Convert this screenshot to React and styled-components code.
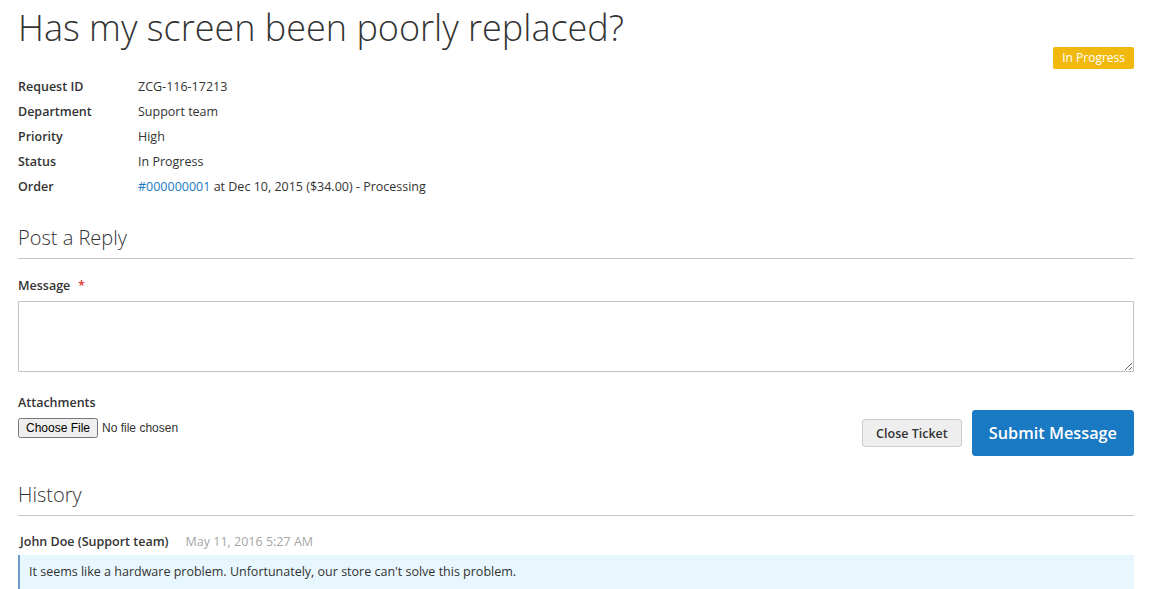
import React from "react";
import styled, { createGlobalStyle } from "styled-components";

const GlobalStyle = createGlobalStyle`
  html, body {
    margin: 0;
    padding: 0;
    background: #fff;
  }
  body {
    font-family: "Open Sans", "Liberation Sans", sans-serif;
    font-size: 12.5px;
    color: #333;
  }
`;

const Page = styled.div`
  padding: 0 21px 0 18px;
`;

const Header = styled.div`
  display: flex;
  justify-content: space-between;
  align-items: flex-start;
`;

const Title = styled.h1`
  margin: 6px 0 0;
  font-size: 36px;
  font-weight: 300;
  line-height: 44px;
  color: #333;
`;

const Badge = styled.span`
  margin-top: 47px;
  background: #f1b90e;
  color: #fff;
  font-size: 12px;
  line-height: 22px;
  padding: 0 9px;
  border-radius: 2px;
`;

const Details = styled.dl`
  display: grid;
  grid-template-columns: 120px 1fr;
  grid-auto-rows: 25px;
  margin: 5px 0 0;
  line-height: 25px;
`;

const Term = styled.dt`
  font-weight: 600;
`;

const Value = styled.dd`
  margin: 0;
`;

const Link = styled.a`
  color: #1979c3;
  text-decoration: none;
`;

const SectionTitle = styled.h2`
  margin: ${(p) => p.$top}px 0 0;
  font-size: 20px;
  font-weight: 300;
  line-height: 26px;
  padding-bottom: 7px;
  border-bottom: 1px solid #c6c6c6;
  color: #333;
`;

const Label = styled.label`
  display: block;
  font-weight: 600;
  line-height: 18px;
  margin-top: ${(p) => p.$top}px;
`;

const Required = styled.span`
  color: #e02b27;
  font-size: 12px;
  margin-left: 8px;
`;

const TextArea = styled.textarea`
  display: block;
  box-sizing: border-box;
  width: 100%;
  height: 71px;
  margin-top: 6px;
  border: 1px solid #c2c2c2;
  border-radius: 1px;
  resize: vertical;
  font-family: inherit;
`;

const FormRow = styled.div`
  display: flex;
  justify-content: space-between;
  align-items: flex-start;
  margin-top: 22px;
`;

const FileInput = styled.input`
  margin-top: 6px;
  font-family: Arial, "Liberation Sans", sans-serif;
  font-size: 12px;
  color: #333;
`;

const Actions = styled.div`
  display: flex;
  align-items: center;
  gap: 10px;
  margin-top: 16px;
`;

const SecondaryButton = styled.button`
  height: 28px;
  padding: 0 13px;
  background: #eee;
  border: 1px solid #ccc;
  border-radius: 3px;
  font-family: inherit;
  font-size: 12.5px;
  font-weight: 600;
  color: #333;
`;

const PrimaryButton = styled.button`
  height: 46px;
  padding: 0 16px;
  background: #1979c3;
  border: 1px solid #1979c3;
  border-radius: 3px;
  font-family: inherit;
  font-size: 16.3px;
  font-weight: 600;
  color: #fff;
`;

const Entry = styled.div`
  margin-top: 17px;
`;

const EntryHead = styled.div`
  display: flex;
  gap: 17px;
  padding-left: 2px;
  line-height: 18px;
`;

const Author = styled.span`
  font-weight: 600;
`;

const Date = styled.span`
  color: #a6a6a6;
`;

const EntryBody = styled.div`
  margin-top: 4px;
  background: #e8f6fd;
  border-left: 2px solid #6b9acb;
  padding: 8px 9px 10px;
  line-height: 18px;
`;

const details = [
  ["Request ID", "ZCG-116-17213"],
  ["Department", "Support team"],
  ["Priority", "High"],
  ["Status", "In Progress"],
];

export default function App() {
  return (
    <>
      <GlobalStyle />
      <Page>
        <Header>
          <Title>Has my screen been poorly replaced?</Title>
          <Badge>In Progress</Badge>
        </Header>
        <Details>
          {details.map(([k, v]) => (
            <React.Fragment key={k}>
              <Term>{k}</Term>
              <Value>{v}</Value>
            </React.Fragment>
          ))}
          <Term>Order</Term>
          <Value>
            <Link href="#">#000000001</Link> at Dec 10, 2015 ($34.00) - Processing
          </Value>
        </Details>

        <SectionTitle $top={26}>Post a Reply</SectionTitle>
        <Label $top={18}>
          Message<Required>*</Required>
        </Label>
        <TextArea />
        <FormRow>
          <div>
            <Label $top={0}>Attachments</Label>
            <FileInput type="file" />
          </div>
          <Actions>
            <SecondaryButton>Close Ticket</SecondaryButton>
            <PrimaryButton>Submit Message</PrimaryButton>
          </Actions>
        </FormRow>

        <SectionTitle $top={26}>History</SectionTitle>
        <Entry>
          <EntryHead>
            <Author>John Doe (Support team)</Author>
            <Date>May 11, 2016 5:27 AM</Date>
          </EntryHead>
          <EntryBody>
            It seems like a hardware problem. Unfortunately, our store can't solve this problem.
          </EntryBody>
        </Entry>
      </Page>
    </>
  );
}
